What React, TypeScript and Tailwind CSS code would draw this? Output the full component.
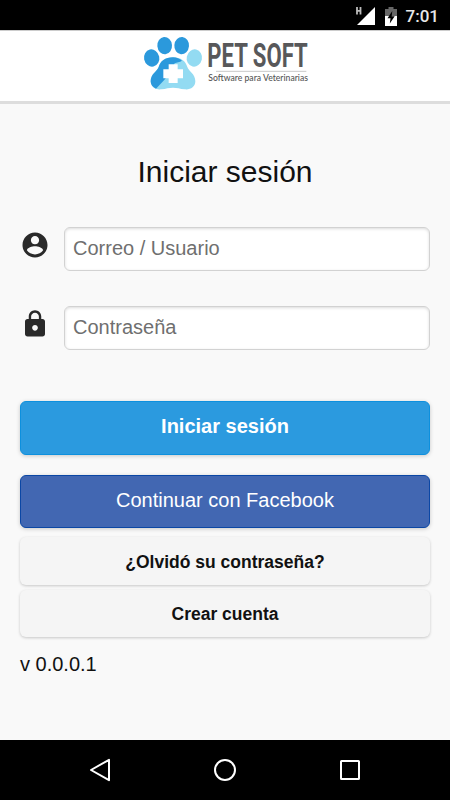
import type { ReactNode } from 'react'

const FONT = "font-['Liberation_Sans',Arial,sans-serif]"

function StatusBar() {
  return (
    <div className="flex h-[30px] shrink-0 items-center justify-end bg-black pr-[11px] pt-[2px]">
      <svg width="20" height="20" viewBox="0 0 20 20" className="mr-[10px]">
        <path d="M20 1V19H2Z" fill="#fff" />
        <path d="M0 0H8V10H0Z" fill="#000" />
        <path d="M2 1V8.5M5.5 1V8.5M2 4.8H5.5" stroke="#bbb" strokeWidth="1.8" />
      </svg>
      <svg width="12" height="19" viewBox="0 0 12 19" className="mr-[9px]">
        <path d="M3.5 0h5v2H12v7H0V2h3.5z" fill="#666" />
        <path d="M0 9h12v10H0z" fill="#fff" />
        <path d="M7.3 4 2.5 11.3h3L4.8 16.5 9.7 9.3h-3z" fill="#000" />
      </svg>
      <span className="font-[Roboto,sans-serif] text-[17px] leading-5 font-medium text-[#e8e8e8]">7:01</span>
    </div>
  )
}

function Logo() {
  return (
    <svg width="180" height="70" viewBox="0 0 540 210" role="img" aria-label="Pet Soft" className="overflow-visible">
      <g fill="#2b99dc">
        <ellipse cx="47" cy="81" rx="23" ry="26" transform="rotate(-12 47 81)" />
        <ellipse cx="86" cy="44" rx="22" ry="26" transform="rotate(-5 86 44)" />
        <ellipse cx="137" cy="44" rx="22" ry="26" transform="rotate(5 137 44)" />
      </g>
      <ellipse cx="175" cy="81" rx="23" ry="26" transform="rotate(12 175 81)" fill="#93dbf2" />
      <path
        d="M111 79C87 79 73 91 68 108C64 121 44 128 44 151C44 168 59 177 76 175C91 173 98 170 111 170C124 170 131 173 146 175C163 177 178 168 178 151C178 128 158 121 154 108C149 91 135 79 111 79Z"
        fill="#93dbf2"
      />
      <path
        d="M111 79C87 79 73 91 68 108C64 121 44 128 44 151C44 161 50 169 60 173L84 148L100 128L116 97C122 93 131 95 138 89C131 83 122 79 111 79Z"
        fill="#2b99dc"
      />
      <path d="M98 100H125V115H141V142H125V156H98V142H82V115H98Z" fill="#fff" />
      <text
        x="214"
        y="109"
        transform="translate(214 0) scale(0.7 1) translate(-214 0)"
        textLength="430"
        lengthAdjust="spacingAndGlyphs"
        fill="#58585a"
        className="font-[Roboto,sans-serif] text-[97px] font-bold"
      >
        PET SOFT
      </text>
      <path d="M240 121H511" stroke="#c9c9c9" strokeWidth="3" />
      <text
        x="217"
        y="149"
        textLength="299"
        lengthAdjust="spacingAndGlyphs"
        fill="#555"
        className="font-[Lato,sans-serif] text-[26px] font-medium"
      >
        Software para Veterinarias
      </text>
    </svg>
  )
}

interface FieldProps {
  icon: ReactNode
  placeholder: string
  type?: string
}

function Field({ icon, placeholder, type = 'text' }: FieldProps) {
  return (
    <div className="flex h-11 items-start">
      <div className="mt-[3px] w-11 shrink-0 text-[#2a2a2a]">{icon}</div>
      <input
        type={type}
        placeholder={placeholder}
        className="h-11 min-w-0 flex-1 rounded-[6px] border border-[#d2d2d2] bg-white px-2 pb-[2px] text-[20px] text-[#333] shadow-[inset_0_1px_3px_rgba(0,0,0,0.14)] outline-none placeholder:text-[#6f6f6f]"
      />
    </div>
  )
}

function AccountIcon() {
  return (
    <svg width="30" height="30" viewBox="0 0 24 24" fill="currentColor">
      <path d="M12 2C6.48 2 2 6.48 2 12s4.48 10 10 10 10-4.48 10-10S17.52 2 12 2zm0 2.8c1.82 0 3.3 1.48 3.3 3.3s-1.48 3.3-3.3 3.3-3.3-1.48-3.3-3.3 1.48-3.3 3.3-3.3zm0 14.7c-2.6 0-5.1-1.28-6.5-3.3.03-2.15 4.4-3.3 6.5-3.3s6.47 1.15 6.5 3.3c-1.4 2.02-3.9 3.3-6.5 3.3z" />
    </svg>
  )
}

function LockIcon() {
  return (
    <svg width="30" height="30" viewBox="0 0 24 24" fill="currentColor">
      <path d="M18 8h-1V6c0-2.76-2.24-5-5-5S7 3.24 7 6v2H6c-1.1 0-2 .9-2 2v10c0 1.1.9 2 2 2h12c1.1 0 2-.9 2-2V10c0-1.1-.9-2-2-2zm-6 9.3c-1.27 0-2.3-1.03-2.3-2.3s1.03-2.3 2.3-2.3 2.3 1.03 2.3 2.3-1.03 2.3-2.3 2.3zm3.1-9.3H8.9V6c0-1.71 1.39-3.1 3.1-3.1 1.71 0 3.1 1.39 3.1 3.1v2z" />
    </svg>
  )
}

function NavBar() {
  return (
    <div className="flex h-[60px] shrink-0 items-center justify-between bg-black px-[87px]">
      <svg width="26" height="26" viewBox="0 0 26 26" fill="none" stroke="#fff" strokeWidth="2">
        <path d="M4 13 22 2.8V23.2Z" strokeLinejoin="round" />
      </svg>
      <svg width="26" height="26" viewBox="0 0 26 26" fill="none" stroke="#fff" strokeWidth="2">
        <circle cx="13" cy="13" r="10" />
      </svg>
      <svg width="26" height="26" viewBox="0 0 26 26" fill="none" stroke="#fff" strokeWidth="2">
        <rect x="4" y="4" width="18" height="18" rx="0.5" />
      </svg>
    </div>
  )
}

export default function App() {
  return (
    <div className={`flex h-[800px] w-[450px] flex-col overflow-hidden bg-[#f9f9f9] text-[#111] ${FONT}`}>
      <StatusBar />
      <header className="flex h-[74px] shrink-0 justify-center border-t border-b-[3px] border-t-[#ccc] border-b-[#ddd] bg-white pl-[2px]">
        <Logo />
      </header>

      <main className="flex flex-1 flex-col px-5">
        <h1 className="mt-[50px] text-center text-[30px] leading-9">Iniciar sesión</h1>

        <form className="mt-[37px] flex flex-col" onSubmit={(e) => e.preventDefault()}>
          <Field icon={<AccountIcon />} placeholder="Correo / Usuario" />
          <div className="h-[35px]" />
          <Field icon={<LockIcon />} placeholder="Contraseña" type="password" />

          <button
            type="submit"
            className="mt-[51px] h-[54px] rounded-[6px] border border-[#0d90de] bg-[#2b9adf] pb-1 text-[20px] font-bold text-white shadow-[0_1px_4px_rgba(0,0,0,0.2)]"
          >
            Iniciar sesión
          </button>
          <button
            type="button"
            className="mt-5 h-[53px] rounded-[6px] border border-[#0b47a5] bg-[#4267b2] pb-1 text-[20px] text-white shadow-[0_1px_4px_rgba(0,0,0,0.2)]"
          >
            Continuar con Facebook
          </button>
          <button
            type="button"
            className="mt-[9px] h-12 rounded-[6px] bg-[#f5f5f5] pt-[2px] text-[17.5px] font-bold shadow-[0_1px_3px_rgba(0,0,0,0.2)]"
          >
            ¿Olvidó su contraseña?
          </button>
          <button
            type="button"
            className="mt-[5px] h-[47px] rounded-[6px] bg-[#f5f5f5] pt-[2px] text-[17.5px] font-bold shadow-[0_1px_3px_rgba(0,0,0,0.2)]"
          >
            Crear cuenta
          </button>
        </form>

        <p className="mt-[15px] text-[20px] leading-6">v 0.0.0.1</p>
      </main>

      <NavBar />
    </div>
  )
}
